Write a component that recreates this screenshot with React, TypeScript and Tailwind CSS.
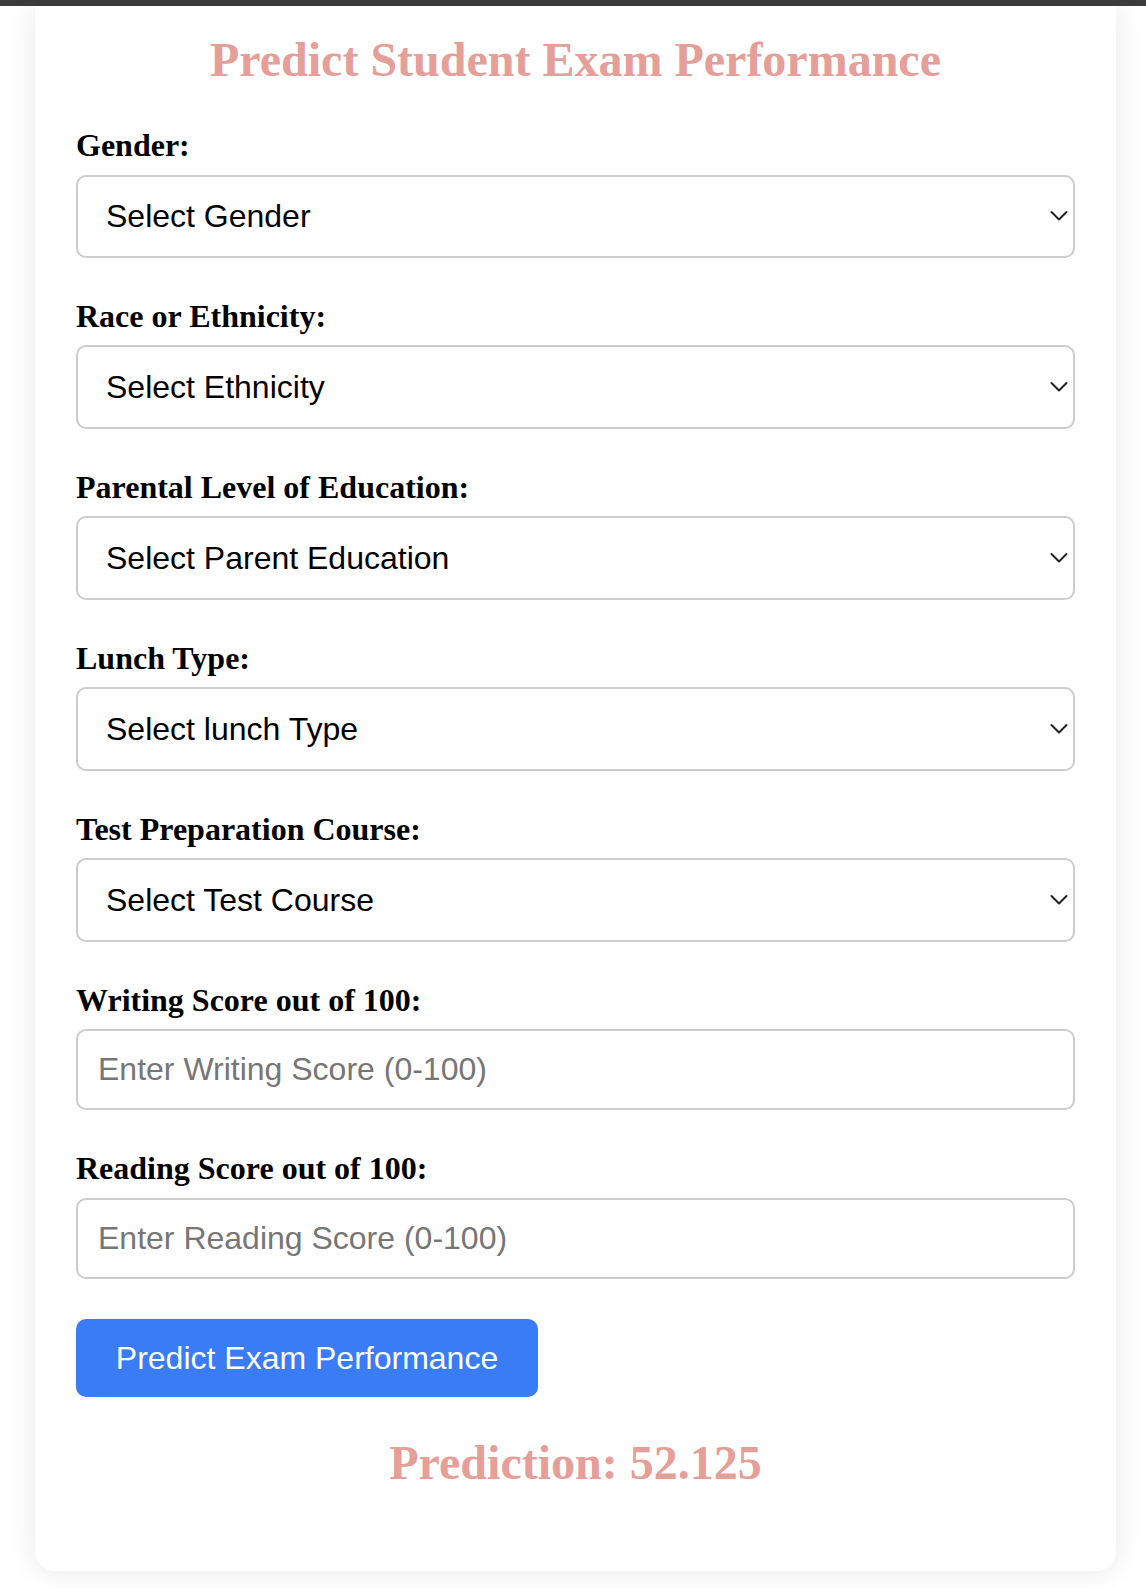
import React from "react";

const serif = { fontFamily: '"Liberation Serif", "Times New Roman", serif' };

function Chevron() {
  return (
    <svg
      className="pointer-events-none absolute right-[7px] top-1/2 -translate-y-1/2"
      width="18"
      height="11"
      viewBox="0 0 18 11"
      fill="none"
    >
      <path d="M1.5 1.5 L9 9 L16.5 1.5" stroke="#222" strokeWidth="2" strokeLinecap="round" strokeLinejoin="round" />
    </svg>
  );
}

function SelectGroup({ label, placeholder }: { label: string; placeholder: string }) {
  return (
    <div className="mb-[41px]">
      <label className="mb-[11px] block text-[32px] font-bold leading-[1.107] text-black" style={serif}>
        {label}
      </label>
      <div className="relative">
        <select
          defaultValue=""
          className="block h-[83.5px] w-full appearance-none rounded-[10px] border-2 border-[#cccccc] bg-white pl-[28px] text-[32px] text-black outline-none"
          style={{ fontFamily: '"Liberation Sans", Arial, sans-serif' }}
        >
          <option value="" disabled>
            {placeholder}
          </option>
        </select>
        <Chevron />
      </div>
    </div>
  );
}

function InputGroup({ label, placeholder, last }: { label: string; placeholder: string; last?: boolean }) {
  return (
    <div className={last ? "mb-[40px]" : "mb-[41px]"}>
      <label className="mb-[11px] block text-[32px] font-bold leading-[1.107] text-black" style={serif}>
        {label}
      </label>
      <input
        type="number"
        placeholder={placeholder}
        className="block h-[81px] w-full rounded-[10px] border-2 border-[#cccccc] bg-white px-[20px] text-[32px] text-black outline-none placeholder:text-[#767676]"
        style={{ fontFamily: '"Liberation Sans", Arial, sans-serif' }}
      />
    </div>
  );
}

export default function App() {
  return (
    <div className="min-h-[1588px] w-full bg-white">
      <div className="h-[6px] w-full bg-[#3c3c3c]" />
      <div className="mx-[35px] w-[1081px] rounded-b-[20px] bg-white px-[41px] pb-[43px] pt-[27px] shadow-[0_0_30px_rgba(0,0,0,0.09)]">
        <h1 className="mb-[42px] text-center text-[48px] font-bold leading-[1.107] text-[#e59e98]" style={serif}>
          Predict Student Exam Performance
        </h1>
        <SelectGroup label="Gender:" placeholder="Select Gender" />
        <SelectGroup label="Race or Ethnicity:" placeholder="Select Ethnicity" />
        <SelectGroup label="Parental Level of Education:" placeholder="Select Parent Education" />
        <SelectGroup label="Lunch Type:" placeholder="Select lunch Type" />
        <SelectGroup label="Test Preparation Course:" placeholder="Select Test Course" />
        <InputGroup label="Writing Score out of 100:" placeholder="Enter Writing Score (0-100)" />
        <InputGroup label="Reading Score out of 100:" placeholder="Enter Reading Score (0-100)" last />
        <button
          type="button"
          className="block h-[78px] w-[462px] rounded-[10px] bg-[#3a7bf6] text-[32px] text-white"
          style={{ fontFamily: '"Liberation Sans", Arial, sans-serif' }}
        >
          Predict Exam Performance
        </button>
        <h2 className="mb-[39px] mt-[39px] text-center text-[48px] font-bold leading-[1.107] text-[#e59e98]" style={serif}>
          Prediction: 52.125
        </h2>
      </div>
    </div>
  );
}
